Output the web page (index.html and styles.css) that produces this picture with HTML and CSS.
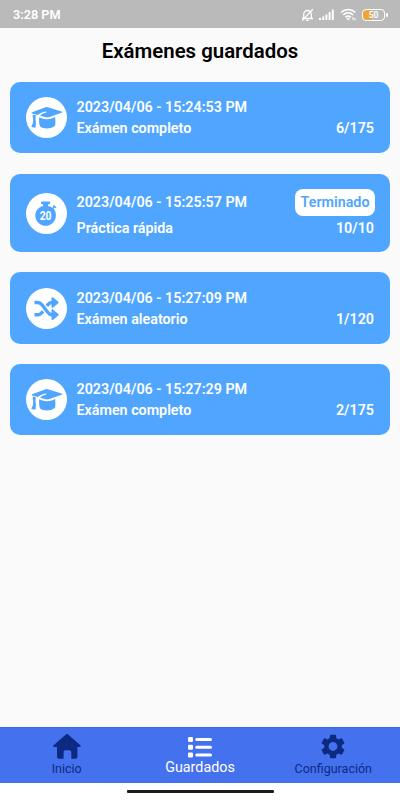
FILE: index.html
```html
<!DOCTYPE html>
<html lang="es">
<head>
    <meta charset="utf-8">
    <meta name="viewport" content="width=device-width, initial-scale=1">
    <title>Exámenes guardados</title>
    <link rel="stylesheet" href="styles.css">
</head>
<body>
<svg class="symbols" aria-hidden="true">
    <symbol id="cap" viewBox="0 0 41 41">
        <path d="M19.500 10.300q1.200-.4 2.400 0L35.600 14.500c.7.300.7 1 0 1.300l-12 4.300c-1.800.6-3.300.5-5.100 0l-4.300-1.400c1.200-1.500 3.200-2.500 6.200-3.100l-.2-1.200c-4 .6-6.900 1.900-8.500 3.700l-5.600-1.700c-.7-.3-.7-.9 0-1.200z"/>
        <path d="M7 17.600l3.100 1c-.8 1.600-.7 3.200-.4 4.900.3 2.700.3 4.800-.3 7.200L5.300 30c1.700-3.400 2.300-6.100 1.700-9-.4-1.200-.5-2.300 0-3.400z"/>
        <path d="M13.200 20.300c5.500 2.600 10.500 2.600 15.900-.3.400 2.800.4 5.600.1 8.500-3.100 3.700-12.300 4-15.300.8-.8-2.900-1-6-.7-9z"/>
    </symbol>
    <symbol id="stopwatch" viewBox="0 0 41 41">
        <path d="M16.300 8.500h6.600c1.700 0 1.700 2.800 0 2.800h-.8v1.600c1.700.3 3.100.9 4.400 1.900l1-1-.8-.9 1.200-1 2.500 2.400-1.100 1.100-.8-.8-.9 1c1.500 1.600 2.300 3.900 2.300 6.600 0 5.900-4.600 10.600-10.300 10.600S9.300 28.100 9.300 22.400c0-4.800 3.300-8.500 7.800-9.500v-1.600h-.8c-1.700 0-1.700-2.800 0-2.800z"/>
        <text x="13.700" y="26.600" textLength="11.800" lengthAdjust="spacingAndGlyphs">20</text>
    </symbol>
    <symbol id="shuffle" viewBox="0 0 41 41">
        <path class="line" d="M8.500 14.500h3.300c2 0 3.100.8 4.200 2.200l5.700 7.600c1.200 1.600 2.300 2.400 4.200 2.400H27M8.500 26.700h3.300c2 0 3.100-.8 4.200-2.200l1-1.300M20.900 17.900l.8-1.100c1.200-1.600 2.300-2.300 4.200-2.300H27"/>
        <path d="M25.500 10.200c0-1 1-1.400 1.700-.7l5.100 4.200c.6.500.6 1.100 0 1.600l-5.100 4.200c-.7.700-1.700.3-1.700-.7zM25.500 22.400c0-1 1-1.400 1.700-.7l5.100 4.200c.6.500.6 1.100 0 1.600l-5.100 4.200c-.7.700-1.700.3-1.700-.7z"/>
    </symbol>
</svg>

<div class="status">
    <span class="clock">3:28 PM</span>
    <div class="status-icons">
        <svg class="bell" width="13" height="14" viewBox="0 0 13 14">
            <path d="M2.700 10.200V6.300a3.800 3.800 0 0 1 7.600 0v3.900M1 10.500h11M5 12.400h3M11.800 1.200 1.200 12.600"/>
        </svg>
        <svg class="signal" width="16" height="11" viewBox="0 0 16 11">
            <path d="M0 9h2v2H0zM3.200 7.500h2V11h-2zM6.400 5.500h2V11h-2zM9.600 3h2v8h-2zM12.800.4h2V11h-2z"/>
        </svg>
        <svg class="wifi" width="17" height="13" viewBox="0 0 17 13">
            <path d="M1 4.500c4.200-4 10.200-4 14.400 0M3.200 7c3-2.800 7-2.800 10 0M5.500 9.300c1.700-1.500 3.700-1.500 5.400 0"/>
            <path class="fill" d="m8.200 12.500-2-2.300h4zM12.500 9h1v3h-1zM14.500 10h1v2.500h-1z"/>
        </svg>
        <div class="battery"><span>50</span></div>
    </div>
</div>

<h1>Exámenes guardados</h1>

<main class="exams">
    <article class="exam">
        <svg class="exam-icon"><use href="#cap"/></svg>
        <div class="exam-info">
            <div class="row"><span>2023/04/06 - 15:24:53 PM</span></div>
            <div class="row"><span>Exámen completo</span><span>6/175</span></div>
        </div>
    </article>
    <article class="exam finished">
        <svg class="exam-icon"><use href="#stopwatch"/></svg>
        <div class="exam-info">
            <div class="row"><span>2023/04/06 - 15:25:57 PM</span><span class="done">Terminado</span></div>
            <div class="row"><span>Práctica rápida</span><span>10/10</span></div>
        </div>
    </article>
    <article class="exam">
        <svg class="exam-icon"><use href="#shuffle"/></svg>
        <div class="exam-info">
            <div class="row"><span>2023/04/06 - 15:27:09 PM</span></div>
            <div class="row"><span>Exámen aleatorio</span><span>1/120</span></div>
        </div>
    </article>
    <article class="exam">
        <svg class="exam-icon"><use href="#cap"/></svg>
        <div class="exam-info">
            <div class="row"><span>2023/04/06 - 15:27:29 PM</span></div>
            <div class="row"><span>Exámen completo</span><span>2/175</span></div>
        </div>
    </article>
</main>

<nav class="tabs">
    <a class="tab">
        <svg width="28" height="25" viewBox="0 0 28 25">
            <path d="M12.900.5c.7-.6 1.500-.6 2.200 0L27.400 11.300c.7.700.4 1.700-.6 1.700h-2.400v9.700c0 1.300-.7 2-2 2h-4.100v-6.200c0-1.400-.8-2.200-2.200-2.200h-3.500c-1.300 0-2 .8-2 2.200v6.200H6c-1.300 0-2-.7-2-2V13H1.200c-1 0-1.300-1-.6-1.700z"/>
        </svg>
        <span>Inicio</span>
    </a>
    <a class="tab active">
        <svg width="24" height="21" viewBox="0 0 24 21">
            <rect x="0" y="0" width="5" height="5" rx="1.300"/>
            <rect x="0" y="7.800" width="5" height="5" rx="1.300"/>
            <rect x="0" y="15.600" width="5" height="5" rx="1.300"/>
            <rect x="7.300" y="1" width="16.700" height="3" rx="1.500"/>
            <rect x="7.300" y="8.800" width="16.700" height="3" rx="1.500"/>
            <rect x="7.300" y="16.600" width="16.700" height="3" rx="1.500"/>
        </svg>
        <span>Guardados</span>
    </a>
    <a class="tab">
        <svg width="24" height="25" viewBox="2.200 2 19.600 20">
            <path d="M19.140 12.940c.040-.300.060-.610.060-.940 0-.320-.020-.640-.070-.940l2.030-1.580a.49.49 0 0 0 .12-.61l-1.920-3.320a.488.488 0 0 0-.59-.22l-2.390.96c-.5-.38-1.030-.7-1.620-.94l-.36-2.540a.484.484 0 0 0-.48-.41h-3.840c-.24 0-.43.17-.47.41l-.36 2.540c-.59.24-1.130.57-1.620.94l-2.390-.96c-.22-.08-.47 0-.59.22L2.740 8.870c-.12.210-.08.470.12.610l2.030 1.580c-.05.300-.09.630-.09.940s.02.640.07.940l-2.030 1.580a.49.49 0 0 0-.12.610l1.920 3.320c.12.220.37.290.59.220l2.390-.96c.5.380 1.030.7 1.620.94l.36 2.540c.05.240.24.410.48.410h3.840c.24 0 .44-.17.47-.41l.36-2.540c.59-.24 1.130-.56 1.620-.94l2.390.96c.22.080.47 0 .59-.22l1.920-3.320c.12-.22.070-.47-.12-.61zM12 15.600A3.610 3.610 0 0 1 8.400 12c0-1.980 1.620-3.600 3.600-3.600s3.600 1.620 3.600 3.600-1.620 3.600-3.600 3.600z"/>
        </svg>
        <span>Configuración</span>
    </a>
</nav>
<div class="home-bar"></div>
</body>
</html>
```

FILE: styles.css
```css
* {
    box-sizing: border-box;
}

body {
    margin: 0;
    height: 100vh;
    display: flex;
    flex-direction: column;
    background: #fafafa;
    font-family: Roboto, "Liberation Sans", sans-serif;
    overflow: hidden;
}

.symbols {
    display: none;
}

.status {
    height: 28px;
    flex: none;
    display: flex;
    align-items: center;
    justify-content: space-between;
    padding: 1px 13px 0;
    background: #bababa;
    color: #fff;
}

.clock {
    font-size: 12.7px;
    font-weight: 600;
}

.status-icons {
    display: flex;
    align-items: center;
    gap: 5px;
}

.bell,
.wifi {
    fill: none;
    stroke: #fff;
    stroke-width: 1.3;
}

.wifi {
    stroke-width: 1.7;
}

.signal,
.wifi .fill {
    fill: #fff;
    stroke: none;
}

.battery {
    position: relative;
    width: 23px;
    height: 12px;
    margin-right: 2px;
    border: 1.5px solid #fff;
    border-radius: 4px;
    background: linear-gradient(to right, #e9a63a 45%, transparent 45%);
    font-size: 8.5px;
    font-weight: 600;
    line-height: 10px;
    text-align: center;
}

.battery::after {
    content: "";
    position: absolute;
    right: -4px;
    top: 3px;
    width: 2px;
    height: 4px;
    border-radius: 1px;
    background: #fff;
}

h1 {
    margin: 11px 0 19px;
    font-size: 20.4px;
    line-height: 24px;
    font-weight: 600;
    text-align: center;
    color: #000;
}

.exams {
    flex: 1;
    display: flex;
    flex-direction: column;
    gap: 20.4px;
    padding: 0 10px;
}

.exam {
    display: flex;
    align-items: center;
    gap: 10px;
    padding: 15.2px 16px 14.1px 15.5px;
    border-radius: 10px;
    background: #50a6ff;
    color: #fff;
}

.exam-icon {
    flex: none;
    width: 41px;
    height: 41px;
    margin-bottom: 1px;
    border-radius: 50%;
    background: #fff;
    fill: #50a6ff;
}

#stopwatch text {
    fill: #fff;
    font-size: 12px;
    font-weight: 700;
}

#shuffle .line {
    fill: none;
    stroke: #50a6ff;
    stroke-width: 3.4;
}

.exam-info {
    flex: 1;
}

.row {
    display: flex;
    align-items: center;
    justify-content: space-between;
    min-height: 21px;
    font-size: 14.3px;
    font-weight: 600;
    line-height: 21px;
}

.finished {
    padding-bottom: 12.5px;
}

.finished .row + .row {
    margin-top: 2.6px;
}

.done {
    margin-right: -1px;
    padding: 3px 5.5px;
    border-radius: 8px;
    background: #fff;
    color: #50a6ff;
}

.tabs {
    height: 56px;
    flex: none;
    display: flex;
    border-top: 1px solid #3c6ade;
    background: #4472ee;
}

.tab {
    flex: 1;
    display: flex;
    flex-direction: column;
    align-items: center;
    justify-content: space-between;
    padding: 6px 0 7px;
    color: #0d2a83;
    font-size: 12.5px;
    line-height: 15px;
}

.tab svg {
    fill: currentColor;
}

.tab.active {
    padding: 9px 0 7px;
    color: #fff;
    font-size: 14.3px;
    line-height: 17px;
}

.home-bar {
    height: 17px;
    flex: none;
    display: flex;
    justify-content: center;
    padding-top: 7px;
    background: #fff;
}

.home-bar::before {
    content: "";
    width: 147px;
    height: 3px;
    border-radius: 1px;
    background: #1c1c1c;
}
```
